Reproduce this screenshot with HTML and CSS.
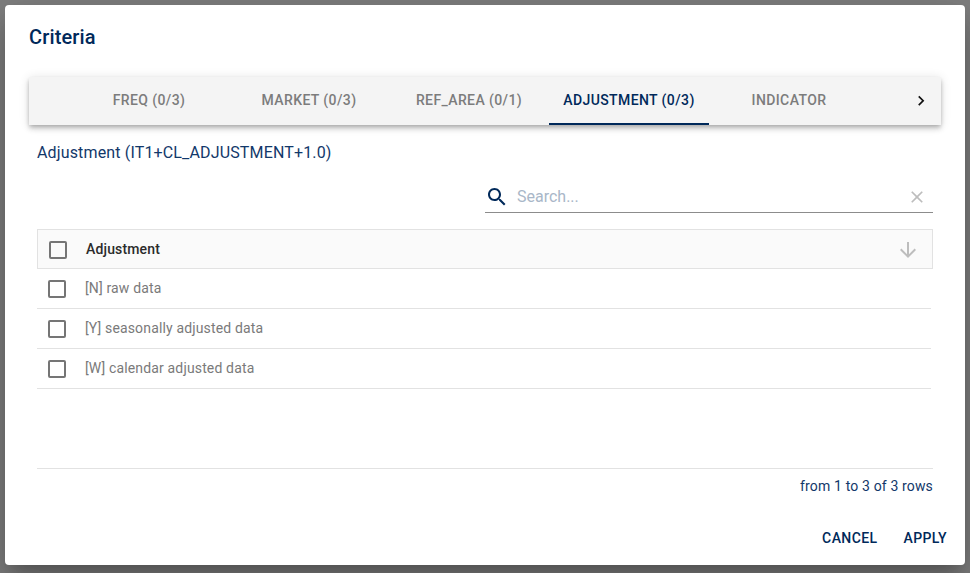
FILE: index.html
```html
<!DOCTYPE html>
<html lang="en">
<head>
<meta charset="utf-8">
<title>Criteria</title>
<link rel="stylesheet" href="styles.css">
</head>
<body>
<div class="dialog" role="dialog" aria-labelledby="title">
  <h2 class="title" id="title">Criteria</h2>
  <div class="tabs">
    <span class="scroll"></span>
    <div class="tab-list" role="tablist">
      <button class="tab" role="tab">FREQ (0/3)</button>
      <button class="tab" role="tab">MARKET (0/3)</button>
      <button class="tab" role="tab">REF_AREA (0/1)</button>
      <button class="tab active" role="tab">ADJUSTMENT (0/3)</button>
      <button class="tab" role="tab">INDICATOR</button>
    </div>
    <span class="scroll"><svg width="20" height="20" viewBox="0 0 24 24"><path d="M8.59 16.34l4.58-4.59-4.58-4.59L10 5.75l6 6-6 6z"/></svg></span>
  </div>
  <div class="panel">
    <div class="subtitle">Adjustment (IT1+CL_ADJUSTMENT+1.0)</div>
    <div class="search">
      <svg class="search-icon" width="24" height="24" viewBox="0 0 24 24"><path d="M15.5 14h-.79l-.28-.27C15.41 12.59 16 11.11 16 9.5 16 5.91 13.09 3 9.5 3S3 5.91 3 9.5 5.91 16 9.5 16c1.61 0 3.09-.59 4.23-1.57l.27.28v.79l5 4.99L20.49 19l-4.99-5zm-6 0C7.01 14 5 11.99 5 9.5S7.01 5 9.5 5 14 7.01 14 9.5 11.99 14 9.5 14z"/></svg>
      <span class="placeholder">Search...</span>
      <svg class="clear-icon" width="20" height="20" viewBox="0 0 24 24"><path d="M19 6.41L17.59 5 12 10.59 6.41 5 5 6.41 10.59 12 5 17.59 6.41 19 12 13.41 17.59 19 19 17.59 13.41 12z"/></svg>
    </div>
    <div class="grid">
      <div class="head">
        <span class="box"></span>
        <span class="label">Adjustment</span>
        <svg class="sort-icon" width="24" height="24" viewBox="0 0 24 24"><path d="M20 12l-1.41-1.41L13 16.17V4h-2v12.17l-5.58-5.59L4 12l8 8 8-8z"/></svg>
      </div>
      <div class="row"><span class="box"></span><span class="label">[N] raw data</span></div>
      <div class="row"><span class="box"></span><span class="label">[Y] seasonally adjusted data</span></div>
      <div class="row"><span class="box"></span><span class="label">[W] calendar adjusted data</span></div>
    </div>
    <div class="count">from 1 to 3 of 3 rows</div>
  </div>
  <div class="actions">
    <button class="action">CANCEL</button>
    <button class="action">APPLY</button>
  </div>
</div>
</body>
</html>
```

FILE: styles.css
```css
* { box-sizing: border-box; }
body {
  margin: 0;
  padding: 5px;
  height: 573px;
  overflow: hidden;
  background: #7f7f7f;
  font-family: Roboto, "Liberation Sans", sans-serif;
  color: #00295a;
}
button {
  border: 0;
  padding: 0;
  background: none;
  font: 500 14px/24px Roboto, "Liberation Sans", sans-serif;
  color: inherit;
}
svg { display: block; fill: currentColor; flex: none; }
.dialog {
  display: flex;
  flex-direction: column;
  width: 960px;
  height: 560px;
  background: #fff;
  border-radius: 4px;
  box-shadow: 0 11px 15px -7px rgba(0,0,0,.2), 0 24px 38px 3px rgba(0,0,0,.14), 0 9px 46px 8px rgba(0,0,0,.12);
}
.title {
  margin: 0;
  padding: 16px 24px;
  font-size: 20px;
  line-height: 32px;
  font-weight: 500;
  letter-spacing: .15px;
}
.tabs {
  display: flex;
  flex: none;
  height: 48px;
  margin: 8px 24px 0;
  background: #f4f4f4;
  box-shadow: 0 2px 4px -1px rgba(0,0,0,.2), 0 4px 5px 0 rgba(0,0,0,.14), 0 1px 10px 0 rgba(0,0,0,.12);
}
.scroll {
  display: flex;
  flex: none;
  width: 40px;
  align-items: center;
  justify-content: center;
  color: #111;
}
.tab-list { display: flex; flex: 1; }
.tab {
  width: 160px;
  height: 48px;
  padding-bottom: 1px;
  border-bottom: 2px solid transparent;
  letter-spacing: .4px;
  color: #7c7c7c;
}
.tab.active {
  color: #00295a;
  border-bottom-color: #00295a;
}
.panel { padding: 16px 32px 0; }
.subtitle { font-size: 16px; line-height: 24px; letter-spacing: .15px; color: #12386a; }
.search {
  display: flex;
  align-items: center;
  width: 448px;
  height: 32px;
  margin: 16px 0 0 auto;
  padding-right: 6px;
  border-bottom: 1px solid #8c8c8c;
}
.placeholder { flex: 1; margin-left: 8px; font-size: 16px; color: #a9b7c8; }
.clear-icon { color: #bdbdbd; }
.grid { height: 240px; margin-top: 16px; border-bottom: 1px solid #e2e2e2; }
.head, .row { display: flex; align-items: center; height: 40px; font-size: 14px; }
.head {
  padding: 0 12px 0 11px;
  border: 1px solid #e2e2e2;
  background: #fafafa;
  font-weight: 500;
  letter-spacing: .15px;
  color: #2b2b2b;
}
.row {
  margin-right: 2px;
  padding: 0 0 2px 11px;
  border-bottom: 1px solid #e2e2e2;
  letter-spacing: .15px;
  color: #7a7a7a;
}
.box {
  width: 18px;
  height: 18px;
  margin: 2px 19px 0 0;
  border: 2px solid #757575;
  border-radius: 2px;
}
.sort-icon { margin: 2px 0 0 auto; color: #bdbdbd; }
.count { margin-top: 5px; text-align: right; font-size: 14px; line-height: 24px; letter-spacing: .15px; color: #12386a; }
.actions { display: flex; justify-content: flex-end; gap: 26px; margin-top: 28px; padding-right: 18px; }
.action { letter-spacing: .4px; }
```
